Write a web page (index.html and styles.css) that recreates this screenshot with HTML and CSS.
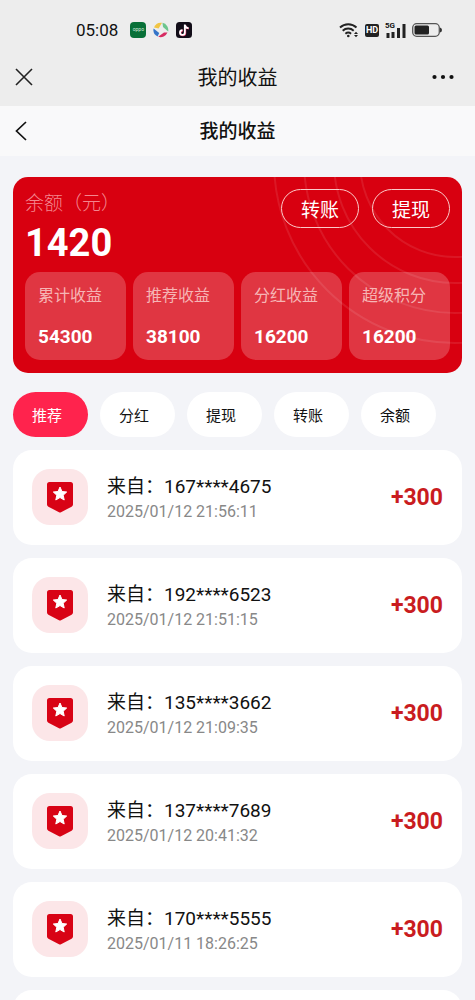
FILE: index.html
```html
<!DOCTYPE html>
<html lang="zh-CN">
<head>
<meta charset="utf-8">
<meta name="viewport" content="width=device-width, initial-scale=1">
<title>我的收益</title>
<link rel="stylesheet" href="styles.css">
</head>
<body>
<svg class="defs" aria-hidden="true">
  <symbol id="badge" viewBox="0 0 26 31">
    <path d="M2.500 0h21A2.500 2.500 0 0 1 26 2.500V22.500a2.500 2.500 0 0 1-1.400 2.200L14 30.200a2.200 2.200 0 0 1-2 0L1.400 24.700A2.500 2.500 0 0 1 0 22.500V2.500A2.500 2.500 0 0 1 2.500 0z" fill="#d80315"/>
    <path d="M13 5l2 4.500 4.700.5-3.500 3.200 1 4.800-4.200-2.500-4.200 2.500 1-4.800L6.300 10l4.700-.5z" fill="#fff" stroke="#fff" stroke-linejoin="round"/>
  </symbol>
</svg>
<div class="screen">
  <header class="top">
    <div class="status">
      <div class="status-group">
        <time class="clock">05:08</time>
        <span class="oppo">oppo</span>
        <svg class="app-icon" viewBox="0 0 16 16" aria-hidden="true">
          <path d="M1 5.500A7.500 7.500 0 0 1 9 .8L5.600 6.600z" fill="#f1c544"/>
          <path d="M9.500.8a7.400 7.400 0 0 1 5.700 8.600L10 5z" fill="#6cc58c"/>
          <path d="M14.500 10.500a7.400 7.400 0 0 1-9.300 4.200L11 10.500z" fill="#d72b62"/>
          <path d="M4.600 14.500A7.400 7.400 0 0 1 .6 6.500L6.200 11z" fill="#3474c8"/>
        </svg>
        <svg class="app-icon" viewBox="0 0 16 16" aria-hidden="true">
          <rect width="16" height="16" rx="3.500" fill="#120d18"/>
          <path d="M8.800 2.500v8a2.400 2.400 0 1 1-2.400-2.400M8.800 3c.3 2 1.700 3 3.700 3.200" fill="none" stroke="#e43b68" stroke-width="1.800" transform="translate(.5 .4)"/>
          <path d="M8.800 2.500v8a2.400 2.400 0 1 1-2.400-2.400M8.800 3c.3 2 1.700 3 3.700 3.200" fill="none" stroke="#fff" stroke-width="1.800"/>
        </svg>
      </div>
      <div class="status-group status-right">
        <svg class="wifi" viewBox="0 0 20 16" fill="none" stroke="#222" stroke-width="1.900" aria-hidden="true">
          <path d="M1 5.500a12 12 0 0 1 16.500 0M3.700 8.700a8 8 0 0 1 11 0M6.400 11.700a4.500 4.500 0 0 1 5.700 0"/>
          <circle cx="9.300" cy="14" r="1.300" fill="#222" stroke="none"/>
          <path d="M15 12l2-2.300 2 2.300zM15 13l2 2.300 2-2.300z" fill="#222" stroke="none"/>
        </svg>
        <span class="hd">HD</span>
        <span class="signal">
          <span class="net">5G</span>
          <svg class="bars" viewBox="0 0 20 15" fill="#222" aria-hidden="true">
            <path d="M1 10h3v5H1zM6 9h3v6H6zM11.500 5h3v10h-3zM17 1h3v14h-3z"/>
          </svg>
        </span>
        <svg class="battery" viewBox="0 0 30 14" aria-hidden="true">
          <rect x=".7" y=".7" width="26.600" height="12.600" rx="4" fill="none" stroke="#555" stroke-width="1.300"/>
          <rect x="2.500" y="2.500" width="14.500" height="9" rx="1.500" fill="#222"/>
          <path d="M28 4.500q2 .5 2 2.500t-2 2.500z" fill="#333"/>
        </svg>
      </div>
    </div>
    <div class="bar">
      <button class="icon-btn" type="button" aria-label="关闭">
        <svg class="close" viewBox="0 0 18 18" fill="none" stroke="#222" stroke-width="1.600"><path d="M1 1l16 16M17 1L1 17"/></svg>
      </button>
      <div class="bar-title">我的收益</div>
      <button class="icon-btn icon-end" type="button" aria-label="更多">
        <svg class="more" viewBox="0 0 22 6" fill="#111"><circle cx="2.500" cy="3" r="2.100"/><circle cx="11" cy="3" r="2.100"/><circle cx="19.500" cy="3" r="2.100"/></svg>
      </button>
    </div>
  </header>
  <nav class="bar page-bar">
    <button class="icon-btn" type="button" aria-label="返回">
      <svg class="back" viewBox="0 0 12 20" fill="none" stroke="#111" stroke-width="1.700"><path d="M11 1L1.500 10 11 19"/></svg>
    </button>
    <h1 class="page-title">我的收益</h1>
    <span></span>
  </nav>
  <main class="content">
    <section class="wallet">
      <svg class="rings" viewBox="0 0 200 196" fill="none" stroke="#fff" stroke-opacity=".09" stroke-width="2" aria-hidden="true">
        <circle cx="193" cy="-15" r="95"/><circle cx="193" cy="-15" r="121"/><circle cx="193" cy="-15" r="151"/><circle cx="193" cy="-15" r="181"/>
      </svg>
      <div class="wallet-head">
        <div>
          <div class="balance-label">余额（元）</div>
          <div class="balance">1420</div>
        </div>
        <div class="actions">
          <button class="action" type="button">转账</button>
          <button class="action" type="button">提现</button>
        </div>
      </div>
      <dl class="stats">
        <div class="stat"><dt>累计收益</dt><dd>54300</dd></div>
        <div class="stat"><dt>推荐收益</dt><dd>38100</dd></div>
        <div class="stat"><dt>分红收益</dt><dd>16200</dd></div>
        <div class="stat"><dt>超级积分</dt><dd>16200</dd></div>
      </dl>
    </section>
    <div class="tabs">
      <button class="tab active" type="button">推荐</button>
      <button class="tab" type="button">分红</button>
      <button class="tab" type="button">提现</button>
      <button class="tab" type="button">转账</button>
      <button class="tab" type="button">余额</button>
    </div>
    <ul class="list">
      <li class="item">
        <span class="medal"><svg class="medal-icon"><use href="#badge"/></svg></span>
        <div class="info"><div class="from">来自：167****4675</div><time class="date">2025/01/12 21:56:11</time></div>
        <span class="amount">+300</span>
      </li>
      <li class="item">
        <span class="medal"><svg class="medal-icon"><use href="#badge"/></svg></span>
        <div class="info"><div class="from">来自：192****6523</div><time class="date">2025/01/12 21:51:15</time></div>
        <span class="amount">+300</span>
      </li>
      <li class="item">
        <span class="medal"><svg class="medal-icon"><use href="#badge"/></svg></span>
        <div class="info"><div class="from">来自：135****3662</div><time class="date">2025/01/12 21:09:35</time></div>
        <span class="amount">+300</span>
      </li>
      <li class="item">
        <span class="medal"><svg class="medal-icon"><use href="#badge"/></svg></span>
        <div class="info"><div class="from">来自：137****7689</div><time class="date">2025/01/12 20:41:32</time></div>
        <span class="amount">+300</span>
      </li>
      <li class="item">
        <span class="medal"><svg class="medal-icon"><use href="#badge"/></svg></span>
        <div class="info"><div class="from">来自：170****5555</div><time class="date">2025/01/11 18:26:25</time></div>
        <span class="amount">+300</span>
      </li>
      <li class="item"></li>
    </ul>
  </main>
</div>
</body>
</html>
```
FILE: styles.css
```css
* { box-sizing: border-box; }
body {
  margin: 0;
  background: #f3f4f8;
  color: #111;
  font-family: Roboto, "Noto Sans CJK SC", sans-serif;
}
button {
  font: inherit;
  color: inherit;
  border: 0;
  padding: 0;
  background: none;
  cursor: pointer;
}
ul, dl, dd, h1 { margin: 0; padding: 0; }
.defs { display: none; }
.screen { height: 100vh; overflow: hidden; }

.top { background: #ededed; padding-top: 12px; }
.status {
  display: flex;
  justify-content: space-between;
  align-items: center;
  height: 36px;
  padding: 0 33px 0 76px;
}
.status-group { display: flex; align-items: center; gap: 7px; }
.status-right { gap: 6px; }
.clock { font-size: 17px; margin-right: 5px; }
.oppo {
  width: 16px;
  height: 16px;
  border-radius: 4px;
  background: #087038;
  color: #d5eadc;
  font-size: 5px;
  line-height: 15px;
  text-align: center;
}
.app-icon { width: 16px; height: 16px; }
.wifi { width: 20px; height: 16px; }
.hd {
  width: 14px;
  height: 13px;
  border-radius: 2px;
  background: #222;
  color: #fff;
  font-size: 9px;
  font-weight: 700;
  line-height: 13px;
  text-align: center;
}
.signal { position: relative; width: 21px; height: 15px; }
.net {
  position: absolute;
  left: 0;
  top: -1px;
  font-size: 8px;
  font-weight: 700;
  line-height: 8px;
}
.bars { display: block; width: 21px; height: 15px; }
.battery { width: 30px; height: 14px; }

.bar {
  display: grid;
  grid-template-columns: 1fr auto 1fr;
  align-items: center;
  height: 58px;
  padding: 0 21px 0 15px;
}
.icon-btn { display: flex; align-items: center; height: 40px; }
.icon-end { justify-self: end; }
.close { width: 18px; height: 18px; }
.more { width: 22px; height: 6px; }
.back { width: 12px; height: 20px; }
.bar-title { padding: 2px 0 0 6px; font-size: 20px; line-height: 28px; }
.page-bar {
  height: 50px;
  padding: 0 15px;
  background: #f9f9fa;
}
.page-title { padding-top: 2px; font-size: 19px; font-weight: 500; line-height: 28px; }

.content { padding: 21px 13px 0; }
.wallet {
  position: relative;
  overflow: hidden;
  padding: 12px 12px 13px;
  border-radius: 15px;
  background: #d80010;
  color: #fff;
}
.rings { position: absolute; top: 0; right: 0; width: 200px; height: 196px; }
.wallet-head {
  position: relative;
  display: flex;
  justify-content: space-between;
  height: 83px;
}
.balance-label {
  padding-top: 1px;
  font-size: 19px;
  font-weight: 300;
  line-height: 28px;
  color: #f4868e;
}
.balance { font-size: 38px; font-weight: 700; line-height: 50px; }
.actions { display: flex; gap: 13px; }
.action {
  width: 78px;
  height: 39px;
  border: 1px solid #fbc9c8;
  border-radius: 20px;
  font-size: 19px;
}
.stats {
  position: relative;
  display: grid;
  grid-template-columns: repeat(4, 1fr);
  gap: 7px;
}
.stat {
  height: 88px;
  padding: 12px 13px;
  border-radius: 15px;
  background: rgba(255, 255, 255, .21);
}
.stat dt { font-size: 16px; line-height: 24px; color: #f6b5b5; }
.stat dd { margin-top: 17px; font-size: 19px; font-weight: 700; line-height: 24px; }

.tabs { display: flex; gap: 12px; margin-top: 19px; }
.tab {
  width: 75px;
  height: 45px;
  padding-left: 19px;
  border-radius: 23px;
  background: #fff;
  font-size: 15px;
  text-align: left;
}
.tab.active { background: #ff234d; color: #fff; }

.list {
  display: grid;
  gap: 13px;
  margin-top: 13px;
  list-style: none;
}
.item {
  display: flex;
  align-items: center;
  height: 95px;
  padding: 0 19px 1px;
  border-radius: 19px;
  background: #fff;
}
.medal {
  display: flex;
  align-items: center;
  justify-content: center;
  width: 56px;
  height: 56px;
  border-radius: 18px;
  background: #fce6e8;
}
.medal-icon { width: 26px; height: 31px; }
.info { flex: 1; margin-left: 19px; padding-top: 2px; }
.from { font-size: 19px; line-height: 28px; }
.date { display: block; font-size: 16px; line-height: 22px; color: #888; }
.amount { font-size: 23px; font-weight: 700; color: #c91c20; }
```
